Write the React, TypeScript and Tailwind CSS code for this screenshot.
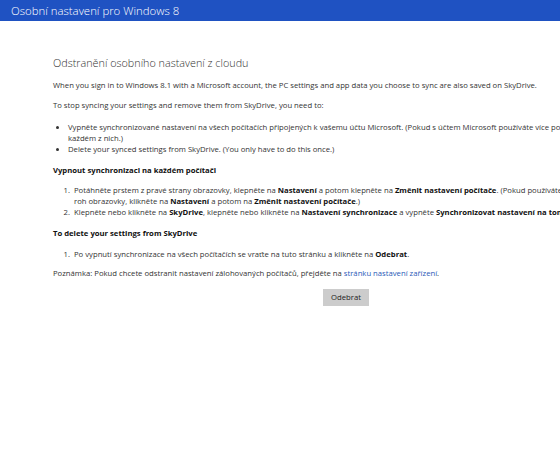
import React from "react";

const B = ({ children }: { children: React.ReactNode }) => (
  <span className="font-bold text-[#111]">{children}</span>
);

export default function App() {
  return (
    <div className="w-[560px] h-[449px] overflow-hidden bg-white text-[#333] font-['Open_Sans',sans-serif]">
      <div className="h-[21px] bg-[#1f52c2] flex items-center pl-[11px]">
        <span className="text-[11.4px] text-white font-light leading-none">Osobní nastavení pro Windows 8</span>
      </div>
      <div className="w-[640px] ml-[53px] pt-[34px] text-[7.7px] leading-[11px]">
        <h1 className="text-[10.8px] font-light leading-[16px] text-[#333]">Odstranění osobního nastavení z cloudu</h1>
        <p className="mt-[9px]">
          When you sign in to Windows 8.1 with a Microsoft account, the PC settings and app data you choose to sync are also saved on SkyDrive.
        </p>
        <p className="mt-[9px]">To stop syncing your settings and remove them from SkyDrive, you need to:</p>
        <ul className="mt-[11px] ml-[15px] list-disc">
          <li>
            Vypněte synchronizované nastavení na všech počítačích připojených k vašemu účtu Microsoft. (Pokud s účtem Microsoft používáte více počítačů, je to nutné provést na každém z nich.)
          </li>
          <li>Delete your synced settings from SkyDrive. (You only have to do this once.)</li>
        </ul>
        <h2 className="mt-[10px] font-bold text-[#111]">Vypnout synchronizaci na každém počítači</h2>
        <ol className="mt-[9px] ml-[19px] list-decimal">
          <li className="pl-[2px] w-[648px]">
            Potáhněte prstem z pravé strany obrazovky, klepněte na <B>Nastavení</B> a potom klepněte na <B>Změnit nastavení počítače</B>. (Pokud používáte myš, nastavte ukazatel do pravého dolního roh obrazovky, klikněte na <B>Nastavení</B> a potom na <B>Změnit nastavení počítače</B>.)
          </li>
          <li className="pl-[2px]">
            Klepněte nebo klikněte na <B>SkyDrive</B>, klepněte nebo klikněte na <B>Nastavení synchronizace</B> a vypněte <B>Synchronizovat nastavení na tomto počítači</B>.
          </li>
        </ol>
        <h2 className="mt-[10px] font-bold text-[#111]">To delete your settings from SkyDrive</h2>
        <ol className="mt-[10px] ml-[19px] list-decimal">
          <li className="pl-[2px]">
            Po vypnutí synchronizace na všech počítačích se vraťte na tuto stránku a klikněte na <B>Odebrat</B>.
          </li>
        </ol>
        <p className="mt-[8px]">
          Poznámka: Pokud chcete odstranit nastavení zálohovaných počítačů, přejděte na{" "}
          <span className="text-[#2a5ab8]">stránku nastavení zařízení</span>.
        </p>
        <div className="mt-[10px] ml-[270px]">
          <button className="w-[46px] h-[17px] bg-[#cccccc] text-[#222] text-[7.7px] leading-none">Odebrat</button>
        </div>
      </div>
    </div>
  );
}
